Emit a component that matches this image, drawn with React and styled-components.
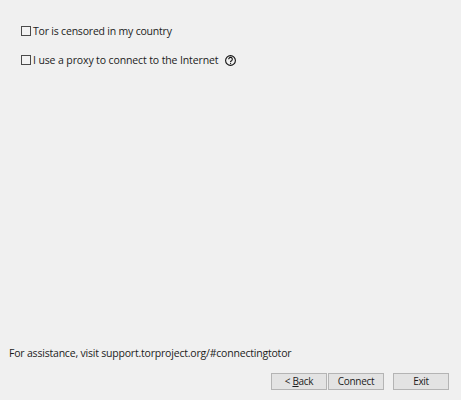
import React from "react";
import styled, { createGlobalStyle } from "styled-components";

const Global = createGlobalStyle`
  html, body { margin: 0; padding: 0; background: #f0f0f0; }
  #root { height: 400px; }
`;

const Page = styled.div`
  width: 461px;
  height: 400px;
  box-sizing: border-box;
  display: flex;
  flex-direction: column;
  background: #f0f0f0;
  color: #1c1c1c;
  font-family: "Open Sans", "Noto Sans", sans-serif;
  font-size: 10.5px;
  letter-spacing: -0.2px;
  line-height: 16px;
  padding: 23px 12px 10px 9px;
  overflow: hidden;
`;

const Options = styled.div`
  display: flex;
  flex-direction: column;
  gap: 13px;
  padding-left: 12px;
`;

const Option = styled.label`
  display: flex;
  align-items: center;
  height: 16px;
  letter-spacing: ${(p) => p.$tracking}px;
`;

const Box = styled.span`
  box-sizing: border-box;
  width: 10px;
  height: 10px;
  border: 1px solid #4a4a4a;
  background: #f2f2f2;
  margin-right: 2px;
  flex: none;
`;

const HelpIcon = styled.svg`
  width: 11px;
  height: 11px;
  margin-left: 7px;
  flex: none;
`;

const Assistance = styled.div`
  margin-top: auto;
  margin-bottom: 12px;
`;

const Buttons = styled.div`
  display: flex;
  justify-content: flex-end;
`;

const Button = styled.div`
  box-sizing: border-box;
  width: 56px;
  height: 17px;
  margin-left: ${(p) => p.$gap}px;
  padding-bottom: 2px;
  display: flex;
  align-items: center;
  justify-content: center;
  background: #e3e3e3;
  border: 1px solid #b4b4b4;
  font-size: 10px;
  letter-spacing: -0.3px;
`;

const Key = styled.span`
  text-decoration: underline;
`;

export default function App() {
  return (
    <Page>
      <Global />
      <Options>
        <Option $tracking={-0.2}><Box />Tor is censored in my country</Option>
        <Option $tracking={-0.12}>
          <Box />I use a proxy to connect to the Internet
          <HelpIcon viewBox="0 0 11 11">
            <circle cx="5.5" cy="5.5" r="4.9" fill="none" stroke="#111" strokeWidth="1.1" />
            <path d="M3.7 4.3a1.8 1.8 0 1 1 2.8 1.4c-.7.4-1 .6-1 1.3" fill="none" stroke="#111" strokeWidth="1.1" />
            <rect x="5" y="7.8" width="1.1" height="1.1" fill="#111" />
          </HelpIcon>
        </Option>
      </Options>
      <Assistance>For assistance, visit support.torproject.org/#connectingtotor</Assistance>
      <Buttons>
        <Button $gap={0}>&lt;&nbsp;<Key>B</Key>ack</Button>
        <Button $gap={1}>Connect</Button>
        <Button $gap={9}>Exit</Button>
      </Buttons>
    </Page>
  );
}
